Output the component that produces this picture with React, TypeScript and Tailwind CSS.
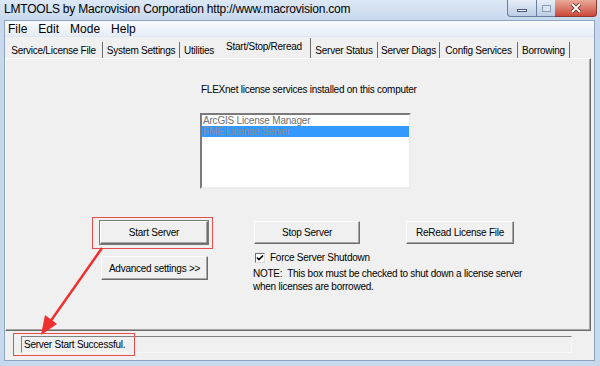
const TABS = [
  { label: "Service/License File", w: "w-[98px]" },
  { label: "System Settings", w: "w-[77px]" },
  { label: "Utilities", w: "w-[38px]", noSep: true },
  { label: "Start/Stop/Reread", w: "w-[93px]", active: true },
  { label: "Server Status", w: "w-[67px]" },
  { label: "Server Diags", w: "w-[62px]" },
  { label: "Config Services", w: "w-[78px]" },
  { label: "Borrowing", w: "w-[52px]" },
];

function WinButton({ label, className }: { label: string; className: string }) {
  return (
    <div
      className={`flex items-center justify-center bg-[#f0f0f0] border border-t-[#fdfdfd] border-l-[#fdfdfd] border-r-[#6b6b6b] border-b-[#6b6b6b] shadow-[inset_-1px_-1px_0_#a6a6a6] text-[10px] tracking-[-0.25px] text-black ${className}`}
    >
      {label}
    </div>
  );
}

export default function App() {
  return (
    <div className="relative w-[600px] h-[366px] overflow-hidden bg-[#c8d9ee] flex flex-col font-[Liberation_Sans,Arial,sans-serif]">
      {/* Title bar */}
      <div className="h-[20px] shrink-0 flex items-start justify-between bg-gradient-to-b from-[#dce8f6] to-[#c8d9ee]">
        <span className="pl-[4px] pt-[2px] text-[12px] leading-[15px] tracking-[-0.2px] text-black">
          LMTOOLS by Macrovision Corporation http://www.macrovision.com
        </span>
        <div className="flex mr-[3px] h-[17px]">
          <div className="w-[30px] rounded-bl-[4px] border border-t-0 border-[#6a7d9c] bg-gradient-to-b from-[#e6eef8] to-[#bccde3] flex items-center justify-center">
            <div className="w-[10px] h-[3px] mt-[5px] bg-white border border-[#45587a]" />
          </div>
          <div className="w-[18px] border-b border-[#6a7d9c] bg-gradient-to-b from-[#e6eef8] to-[#bccde3] flex items-center justify-center">
            <div className="w-[9px] h-[7px] border border-[#8a9bb5] bg-[#dbe5f2]" />
          </div>
          <div className="w-[42px] rounded-br-[4px] border border-t-0 border-l-0 border-[#8c3a30] bg-gradient-to-b from-[#e8a898] to-[#c9473a] flex items-center justify-center">
            <svg width="12" height="10" viewBox="0 0 12 10">
              <path d="M2 1 L10 9 M10 1 L2 9" stroke="#5a1a14" strokeWidth="3.4" />
              <path d="M2 1 L10 9 M10 1 L2 9" stroke="#ffffff" strokeWidth="2" />
            </svg>
          </div>
        </div>
      </div>

      {/* Client area */}
      <div className="flex-1 ml-[4px] mr-[5px] mb-[5px] flex flex-col bg-[#f0f0f0] border border-[#8ea5c2]">
        {/* Menu bar */}
        <div className="h-[16px] shrink-0 flex items-center gap-[11px] pl-[3px] bg-gradient-to-b from-[#f8fafd] to-[#e6edf7] border-b border-[#dfe6ef] text-[12px] text-black">
          <span>File</span>
          <span>Edit</span>
          <span>Mode</span>
          <span>Help</span>
        </div>

        {/* Tabs */}
        <div className="h-[21px] shrink-0 flex items-end">
          {TABS.map((t) =>
            t.active ? (
              <div
                key={t.label}
                className={`${t.w} h-[20px] flex justify-center pt-[3px] border-r border-[#6e6e6e] text-[10px] tracking-[-0.25px] text-black leading-[12px]`}
              >
                {t.label}
              </div>
            ) : (
              <div
                key={t.label}
                className={`${t.w} h-[16px] flex items-center justify-center text-[10px] tracking-[-0.25px] text-black ${t.noSep ? "" : "border-r border-[#6e6e6e]"}`}
              >
                {t.label}
              </div>
            )
          )}
        </div>

        {/* Tab panel */}
        <div className="h-[273px] shrink-0 mr-[3px] flex flex-col border-t border-l border-t-white border-l-white border-r border-b border-r-[#6b6b6b] border-b-[#6b6b6b] shadow-[inset_-1px_-1px_0_#a6a6a6]">
          <div className="mt-[25px] ml-[195px] text-[10px] leading-[12px] tracking-[-0.25px] text-black">
            FLEXnet license services installed on this computer
          </div>

          <div className="mt-[17px] ml-[194px] w-[211px] h-[76px] bg-white border-2 border-t-[#7a7a7a] border-l-[#7a7a7a] border-r-[#ececec] border-b-[#ececec] flex flex-col text-[10px] leading-[11px] tracking-[-0.2px]">
            <div className="pl-[1px] text-[#707070]">ArcGIS License Manager</div>
            <div className="pl-[1px] bg-[#3399ff] text-[#8c8c8c]">FME License Server</div>
          </div>

          {/* Button row */}
          <div className="mt-[28px] flex items-start">
            <div className="ml-[86px] w-[121px] h-[32px] border border-[#e5504e] pl-[7px] pt-[3px]">
              <WinButton label="Start Server" className="w-[108px] h-[23px] outline outline-1 outline-[#7a7a7a]" />
            </div>
            <WinButton label="Stop Server" className="ml-[41px] mt-[4px] w-[106px] h-[23px]" />
            <WinButton label="ReRead License File" className="ml-[46px] mt-[4px] w-[108px] h-[23px]" />
          </div>

          <div className="flex items-start">
            <WinButton label="Advanced settings >>" className="ml-[95px] mt-[7px] w-[107px] h-[24px]" />
            <div className="ml-[45px] mt-[3px] flex flex-col text-[10px] tracking-[-0.25px] text-black">
              <div className="flex items-center h-[12px]">
                <div className="ml-[2px] w-[10px] h-[10px] bg-white border border-t-[#6b6b6b] border-l-[#6b6b6b] border-r-[#dcdcdc] border-b-[#dcdcdc] flex items-center justify-center">
                  <svg width="8" height="8" viewBox="0 0 8 8">
                    <path d="M1 3.5 L3 5.5 L7 1.5" fill="none" stroke="#000" strokeWidth="1.6" />
                  </svg>
                </div>
                <span className="ml-[5px] leading-[12px]">Force Server Shutdown</span>
              </div>
              <div className="mt-[3px] leading-[13px] whitespace-pre">
                {"NOTE:  This box must be checked to shut down a license server\nwhen licenses are borrowed."}
              </div>
            </div>
          </div>
        </div>

        {/* Status bar */}
        <div className="relative flex-1 pt-[5px] pl-[16px]">
          <div className="w-[551px] h-[17px] flex items-center pl-[2px] border border-t-[#808080] border-l-[#808080] border-r-[#f8f8f8] border-b-[#f8f8f8] text-[10px] tracking-[-0.25px] text-black">
            Server Start Successful.
          </div>
          <div className="absolute left-[8px] top-[2px] w-[122px] h-[23px] border border-[#e5504e]" />
        </div>
      </div>

      {/* Red annotation arrow */}
      <svg className="absolute inset-0 pointer-events-none" width="600" height="366" viewBox="0 0 600 366">
        <path d="M102 248 L50 322" stroke="#f0302e" strokeWidth="2.5" fill="none" />
        <polygon points="41,335 57,324 45,315" fill="#f0302e" />
      </svg>
    </div>
  );
}
